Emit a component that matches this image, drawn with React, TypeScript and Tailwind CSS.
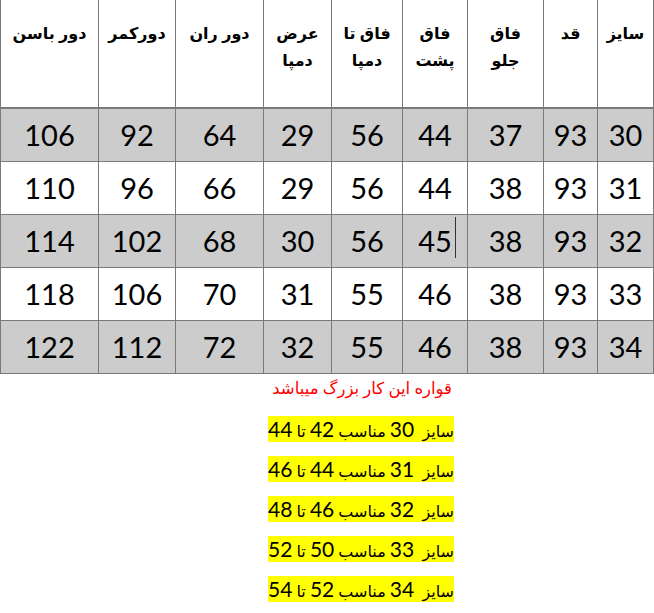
const columns: { label: string[]; width: number }[] = [
  { label: ["سایز"], width: 56 },
  { label: ["قد"], width: 54 },
  { label: ["فاق", "جلو"], width: 76 },
  { label: ["فاق", "پشت"], width: 65 },
  { label: ["فاق تا", "دمپا"], width: 71 },
  { label: ["عرض", "دمپا"], width: 68 },
  { label: ["دور ران"], width: 88 },
  { label: ["دورکمر"], width: 77 },
  { label: ["دور باسن"], width: 98 },
];

const rows = [
  [30, 93, 37, 44, 56, 29, 64, 92, 106],
  [31, 93, 38, 44, 56, 29, 66, 96, 110],
  [32, 93, 38, 45, 56, 30, 68, 102, 114],
  [33, 93, 38, 46, 55, 31, 70, 106, 118],
  [34, 93, 38, 46, 55, 32, 72, 112, 122],
];

const notes = [
  ["30", "42", "44"],
  ["31", "44", "46"],
  ["32", "46", "48"],
  ["33", "50", "52"],
  ["34", "52", "54"],
];

export default function App() {
  return (
    <div
      dir="rtl"
      className="w-[654px] h-[613px] bg-white text-black"
      style={{ fontFamily: 'Lato, "DejaVu Sans", sans-serif' }}
    >
      <table className="table-fixed border-collapse w-[654px]">
        <colgroup>
          {columns.map((c, i) => (
            <col key={i} style={{ width: c.width }} />
          ))}
        </colgroup>
        <thead>
          <tr className="h-[108px]">
            {columns.map((c, i) => (
              <th
                key={i}
                className="border-x border-b-2 border-[#7a7a7a] align-top pt-[20px] px-0 text-[16px] leading-[27px] font-bold"
                style={{ fontFamily: '"Liberation Sans", "DejaVu Sans", sans-serif' }}
              >
                {c.label.map((l, j) => (
                  <div key={j} className="whitespace-nowrap">
                    {l}
                  </div>
                ))}
              </th>
            ))}
          </tr>
        </thead>
        <tbody>
          {rows.map((r, i) => (
            <tr key={i} className={i % 2 === 0 ? "h-[53px] bg-[#cccccc]" : "h-[53px] bg-white"}>
              {r.map((v, j) => (
                <td
                  key={j}
                  className="relative border border-[#7a7a7a] text-center align-middle text-[29px] leading-none p-0"
                >
                  {v}
                  {/* stray cursor mark seen in the sheet */}
                  {i === 2 && j === 3 && (
                    <span className="absolute right-[11px] top-[2px] h-[41px] w-px bg-[#333]" />
                  )}
                </td>
              ))}
            </tr>
          ))}
        </tbody>
      </table>

      <div className="flex flex-col items-start pr-[200px] gap-[14px]">
        <div className="mt-[1px] mb-[1px] text-[16.5px] leading-[26px] text-[#ff0000] whitespace-nowrap pr-[2px]">
          قواره این کار بزرگ میباشد
        </div>
        {notes.map((n, i) => (
          <div
            key={i}
            className="min-w-[184px] h-[26px] bg-[#ffff00] text-right text-[16px] leading-[26px] whitespace-nowrap"
          >
            سایز&nbsp; <span className="text-[21px]">{n[0]}</span> مناسب{" "}
            <span className="text-[21px]">{n[1]}</span> تا{" "}
            <span className="text-[21px]">{n[2]}</span>
          </div>
        ))}
      </div>
    </div>
  );
}
